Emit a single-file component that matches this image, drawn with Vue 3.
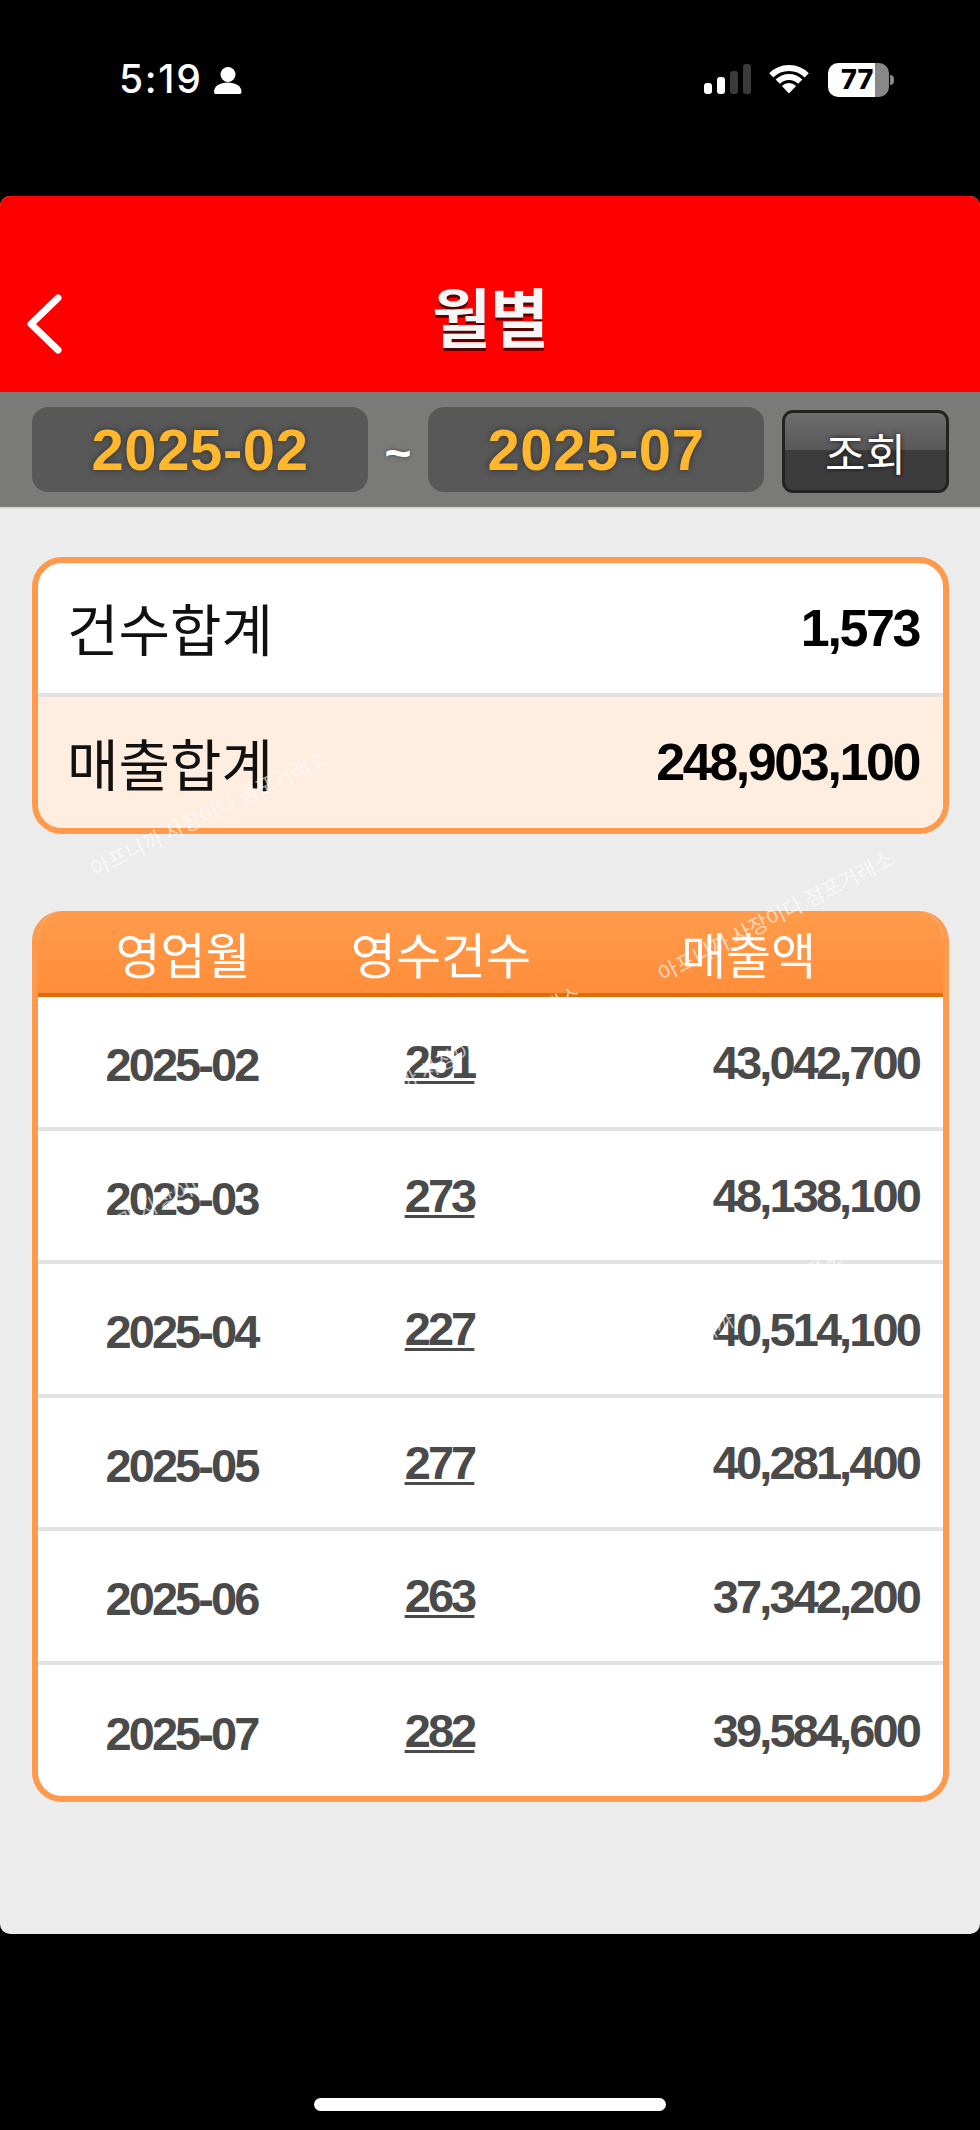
<template>
  <div class="screen">
    <div class="status">
      <span class="time">5:19</span>
      <svg class="person" width="28" height="28" viewBox="0 0 28 28">
        <circle cx="14" cy="8.5" r="7.5" fill="#fff" />
        <path d="M1.5 28 Q0 28 0 26 C0 20 6 16.5 13.7 16.5 C21.5 16.5 27.5 20 27.5 26 Q27.5 28 26 28 Z" fill="#fff" />
      </svg>
      <div class="status-right">
        <svg class="signal" width="47" height="30" viewBox="0 0 47 30">
          <rect x="0" y="19" width="8" height="11" rx="3" fill="#fff" />
          <rect x="13" y="13" width="8" height="17" rx="3" fill="#fff" />
          <rect x="26" y="7" width="8" height="23" rx="3" fill="#3a3a3a" />
          <rect x="39" y="0" width="8" height="30" rx="3" fill="#3a3a3a" />
        </svg>
        <svg class="wifi" width="40" height="29" viewBox="0 0 40 29">
          <path d="M2.32 10.32 A25 25 0 0 1 37.68 10.32" fill="none" stroke="#fff" stroke-width="6" />
          <path d="M8.69 16.69 A16 16 0 0 1 31.31 16.69" fill="none" stroke="#fff" stroke-width="6" />
          <path d="M20 28.5 L12.9 20.9 A10 10 0 0 1 27.1 20.9 Z" fill="#fff" />
        </svg>
        <div class="battery">
          <div class="battery-body"><span>77</span></div>
          <div class="battery-nub"></div>
        </div>
      </div>
    </div>

    <div class="page">
      <div class="topbar">
        <svg class="back" width="38" height="60" viewBox="0 0 38 60">
          <path d="M32 4 L5 30 L32 56" fill="none" stroke="#fff" stroke-width="7" stroke-linecap="round" stroke-linejoin="round" />
        </svg>
        <h1 class="title">월별</h1>
      </div>

      <div class="search">
        <div class="date">2025-02</div>
        <span class="tilde">~</span>
        <div class="date">2025-07</div>
        <button class="btn">조회</button>
      </div>

      <div class="content">
        <div class="card summary">
          <div class="sum-row">
            <span class="sum-label">건수합계</span>
            <span class="sum-value">1,573</span>
          </div>
          <div class="sum-row sum-peach">
            <span class="sum-label">매출합계</span>
            <span class="sum-value">248,903,100</span>
          </div>
        </div>

        <div class="card list">
          <div class="list-head">
            <span>영업월</span>
            <span>영수건수</span>
            <span>매출액</span>
          </div>
          <div v-for="r in rows" :key="r.month" class="list-row">
            <span class="c-month">{{ r.month }}</span>
            <span class="c-count">{{ r.count }}</span>
            <span class="c-amount">{{ r.amount }}</span>
          </div>
        </div>
      </div>
    </div>

    <div class="home-wrap">
      <div class="home"></div>
    </div>

    <span
      v-for="(w, i) in marks"
      :key="i"
      class="mark"
      :style="{ left: w.x + 'px', top: w.y + 'px', transform: 'rotate(' + w.deg + 'deg)' }"
    >아프니까 사장이다 점포거래소</span>
  </div>
</template>

<script setup>
const rows = [
  { month: '2025-02', count: '251', amount: '43,042,700' },
  { month: '2025-03', count: '273', amount: '48,138,100' },
  { month: '2025-04', count: '227', amount: '40,514,100' },
  { month: '2025-05', count: '277', amount: '40,281,400' },
  { month: '2025-06', count: '263', amount: '37,342,200' },
  { month: '2025-07', count: '282', amount: '39,584,600' },
]

// watermark left over the screenshot
const marks = [
  { x: 96, y: 858, deg: -26 },
  { x: 664, y: 963, deg: -27 },
  { x: 70, y: 1236, deg: -26 },
  { x: 352, y: 1098, deg: -27 },
  { x: 670, y: 1344, deg: -30 },
]
</script>

<style scoped>
.screen {
  position: relative;
  height: 2130px;
  display: flex;
  flex-direction: column;
  background: #000;
  overflow: hidden;
  font-family: "Liberation Sans", "Noto Sans CJK KR", sans-serif;
}
.status {
  height: 196px;
  box-sizing: border-box;
  padding: 59px 86px 0 119px;
  display: flex;
  align-items: flex-start;
  color: #fff;
}
.time {
  font-family: Inter, "Liberation Sans", sans-serif;
  font-size: 39px;
  font-weight: 500;
  letter-spacing: 1.7px;
  line-height: 40px;
}
.person {
  margin: 7px 0 0 11px;
}
.status-right {
  margin-left: auto;
  display: flex;
  align-items: flex-start;
}
.signal {
  margin-top: 5px;
}
.wifi {
  margin: 6px 0 0 18px;
}
.battery {
  margin: 4px 0 0 19px;
  display: flex;
  align-items: center;
}
.battery-body {
  width: 61px;
  height: 34px;
  border-radius: 10px;
  background: linear-gradient(to right, #fff 47px, #888 47px);
  color: #000;
  font-family: Inter, "Liberation Sans", sans-serif;
  font-size: 27px;
  font-weight: 800;
  line-height: 34px;
  padding-left: 13px;
  box-sizing: border-box;
}
.battery-nub {
  width: 4px;
  height: 10px;
  margin-left: 1px;
  border-radius: 0 4px 4px 0;
  background: #888;
}

.page {
  height: 1738px;
  background: #ececec;
  border-radius: 10px;
  overflow: hidden;
}
.topbar {
  position: relative;
  height: 196px;
  background: #f00;
  display: flex;
  align-items: center;
  justify-content: center;
}
.back {
  position: absolute;
  left: 26px;
  top: 98px;
}
.title {
  margin: 39px 0 0;
  color: #f6f6f6;
  font-family: "Noto Sans CJK KR", sans-serif;
  font-size: 64px;
  font-weight: 700;
  letter-spacing: -1px;
  line-height: 1;
  text-shadow: 0 3px 0 #5a0000;
}
.search {
  height: 117px;
  box-sizing: border-box;
  background: #7a7b78;
  border-bottom: 2px solid #d8d8d8;
  padding: 15px 31px 0 32px;
  display: flex;
  align-items: flex-start;
}
.date {
  width: 336px;
  height: 85px;
  border-radius: 16px;
  background: #585858;
  color: #ffb72e;
  font-size: 58px;
  font-weight: 700;
  letter-spacing: 0.6px;
  line-height: 85px;
  text-align: center;
  text-shadow: 0 0 6px rgba(30, 30, 30, 0.7);
}
.tilde {
  width: 60px;
  text-align: center;
  color: #fff;
  font-size: 46px;
  font-weight: 700;
  line-height: 93px;
  text-shadow: 0 0 4px rgba(40, 40, 40, 0.6);
}
.btn {
  margin: 3px 0 0 18px;
  width: 167px;
  height: 83px;
  padding: 0;
  border: 3px solid #222;
  border-radius: 11px;
  background: linear-gradient(to bottom, #6e6e6e 0, #585858 48%, #3c3c3c 48%, #3c3c3c 100%);
  color: #fff;
  font-family: "Noto Sans CJK KR", sans-serif;
  font-size: 44px;
  line-height: 1;
  text-shadow: 0 0 5px rgba(0, 0, 0, 0.8);
}

.content {
  padding: 48px 31px 0 32px;
}
.card {
  border: 6px solid #ff9a4d;
  border-radius: 30px;
  background: #fff;
  overflow: hidden;
}
.sum-row {
  height: 130px;
  padding: 0 24px 0 29px;
  display: flex;
  align-items: center;
  justify-content: space-between;
  border-bottom: 4px solid #e3e3e3;
}
.sum-peach {
  height: 131px;
  background: #ffede0;
  border-bottom: none;
}
.sum-label {
  font-family: "Noto Sans CJK KR", sans-serif;
  font-size: 56px;
  line-height: 1;
  color: #111;
  margin-top: -2px;
}
.sum-value {
  font-size: 52px;
  font-weight: 700;
  letter-spacing: -2.4px;
  line-height: 1;
  color: #000;
  margin-top: -1px;
}

.list {
  margin-top: 77px;
  border-top: none;
}
.list-head {
  height: 82px;
  display: grid;
  grid-template-columns: 290px 226px 1fr;
  align-items: center;
  background: linear-gradient(to bottom, #ff9c4c, #ff8d3a);
  border-bottom: 4px solid #e06c0c;
  color: #fff;
  font-family: "Noto Sans CJK KR", sans-serif;
  font-size: 49px;
  line-height: 1;
  text-align: center;
}
.list-row {
  height: 133.5px;
  box-sizing: border-box;
  display: grid;
  grid-template-columns: 287px 229px 1fr;
  align-items: center;
  border-bottom: 4px solid #e3e3e3;
  color: #4a4a4a;
  font-size: 47px;
  font-weight: 700;
  letter-spacing: -2.9px;
  line-height: 1;
}
.list-row:last-child {
  height: 131.5px;
  border-bottom: none;
}
.c-month {
  text-align: center;
  padding-top: 6px;
}
.c-count {
  text-align: center;
  text-decoration: underline;
  text-decoration-thickness: 3px;
  text-underline-offset: 3px;
}
.c-amount {
  text-align: right;
  padding-right: 24px;
  padding-top: 1px;
}

.home-wrap {
  flex: 1;
  display: flex;
  justify-content: center;
  padding-top: 164px;
}
.home {
  width: 352px;
  height: 13px;
  border-radius: 7px;
  background: #fff;
}

.mark {
  position: absolute;
  transform-origin: left bottom;
  white-space: nowrap;
  font-family: "Noto Sans CJK KR", sans-serif;
  font-size: 21px;
  line-height: 1;
  color: rgba(255, 255, 255, 0.62);
  pointer-events: none;
}
</style>

<style>
html, body {
  margin: 0;
  background: #000;
}
</style>
